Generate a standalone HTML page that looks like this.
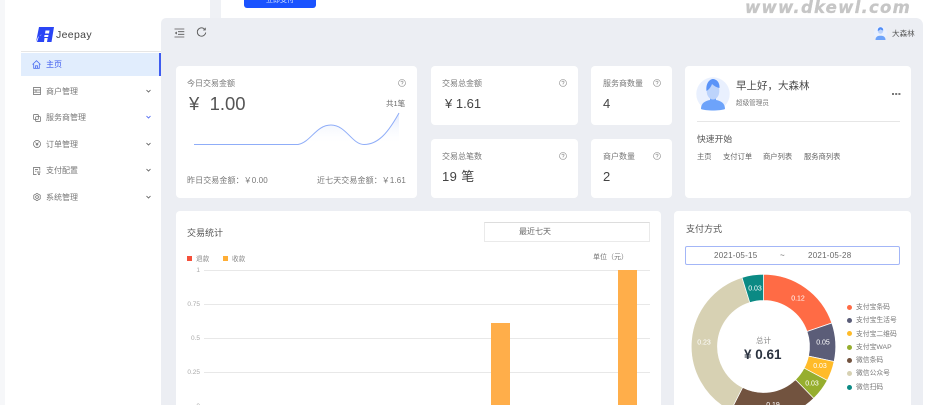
<!DOCTYPE html>
<html lang="zh">
<head>
<meta charset="utf-8">
<title>Jeepay</title>
<style>
html,body{margin:0;padding:0;background:#fff;width:929px;height:405px;overflow:hidden}
body{position:relative;font-family:"Liberation Sans","Noto Sans CJK SC",sans-serif;color:#666}
#w{position:absolute;left:0;top:0;width:929px;height:405px;overflow:hidden;filter:blur(.3px)}
.a,.t{position:absolute}
.t{line-height:12px;height:12px;white-space:nowrap;font-size:8px}
.card{position:absolute;background:#fff;border-radius:4px}
svg{position:absolute;overflow:visible}
.l{color:#777}
.chev{position:absolute;left:146px;width:5px;height:4px}
</style>
</head>
<body>
<div id="w">
<div class="a" style="left:0;top:0;width:5px;height:405px;background:#f6f7f9"></div>
<div class="a" style="left:210px;top:0;width:11px;height:18px;background:#eff1f5"></div>
<div class="a" style="left:244px;top:-10px;width:72px;height:18px;background:#1a53ff;border-radius:3px"></div>
<div class="t" style="left:266px;top:-5px;color:#cfe0ff;font-size:7px">立即支付</div>

<div class="t" style="left:745px;top:-1px;height:18px;line-height:18px;font-family:'DejaVu Sans',sans-serif;font-size:16.500px;font-weight:bold;font-style:italic;color:#c6c6c6;letter-spacing:1.250px;-webkit-text-stroke:.3px #c6c6c6">www.dkewl.com</div>

<!-- main bg -->
<div class="a" style="left:161px;top:18px;width:762px;height:387px;background:#eceef3;border-radius:5px 7px 0 0"></div>

<!-- logo -->
<svg style="left:36px;top:27px" width="18" height="15" viewBox="0 0 18 15">
<path d="M3 0H18L15.500 15H11L11.700 11H8.500L8 15H4L5.300 7.500L2 10L0 15Z" fill="#2a45f5"/>
<path d="M1 15L3 9L6 8L4.500 15Z" fill="#2a45f5"/>
<path d="M9.500 3.500H13.500L13 6.500H9Z M8.500 8H12.500L12.100 10H8.200Z" fill="#fff"/>
</svg>
<div class="t" style="left:56px;top:29px;font-size:10.500px;color:#444;letter-spacing:.35px">Jeepay</div>
<div class="a" style="left:21px;top:51px;width:140px;height:1px;background:#e6e6e6"></div>

<!-- nav -->
<div class="a" style="left:21px;top:53px;width:140px;height:23px;background:#e1edfd"></div>
<div class="a" style="left:159px;top:53px;width:2px;height:23px;background:#3f5cf0"></div>

<svg style="left:32px;top:60px" width="9" height="9" viewBox="0 0 9 9" fill="none" stroke="#4a6cf0" stroke-width=".8"><path d="M.5 4.500L4.500 .7L8.500 4.500M1.700 4V8.300H7.300V4M3.500 8.300V5.800H5.500V8.300"/></svg>
<div class="t" style="left:46px;top:59px;color:#3f5cf0">主页</div>

<svg style="left:33px;top:87px" width="8" height="8" viewBox="0 0 8 8" fill="none" stroke="#666" stroke-width=".7"><path d="M.5 .5H7.500V7.500H.5ZM.5 3H7.500M.5 5.200H7.500M3 3V5.200"/></svg>
<div class="t" style="left:46px;top:86px;color:#777">商户管理</div>
<svg class="chev" style="top:89px" viewBox="0 0 5 4" fill="none" stroke="#555" stroke-width=".8"><path d="M.5 1L2.500 3L4.500 1"/></svg>

<svg style="left:33px;top:114px" width="8" height="8" viewBox="0 0 8 8" fill="none" stroke="#666" stroke-width=".7"><rect x=".5" y=".5" width="4.800" height="4.800" rx=".6"/><rect x="2.700" y="2.700" width="4.800" height="4.800" rx=".6"/></svg>
<div class="t" style="left:46px;top:112px;color:#777">服务商管理</div>
<svg class="chev" style="top:115px" viewBox="0 0 5 4" fill="none" stroke="#3f5cf0" stroke-width=".8"><path d="M.5 1L2.500 3L4.500 1"/></svg>

<svg style="left:33px;top:140px" width="8" height="8" viewBox="0 0 8 8" fill="none" stroke="#666" stroke-width=".7"><circle cx="4" cy="4" r="3.500"/><path d="M2.500 2.500L4 4.200L5.500 2.500M4 4.200V6.300M2.700 4.700H5.300"/></svg>
<div class="t" style="left:46px;top:139px;color:#777">订单管理</div>
<svg class="chev" style="top:142px" viewBox="0 0 5 4" fill="none" stroke="#555" stroke-width=".8"><path d="M.5 1L2.500 3L4.500 1"/></svg>

<svg style="left:33px;top:167px" width="8" height="8" viewBox="0 0 8 8" fill="none" stroke="#666" stroke-width=".7"><path d="M6.800 3.500V.5H.5V7.500H3.500M2 2.500H5M2 4.200H3.500"/><path d="M4 5L7.500 5M5 7.500L7 7.500M4.500 6.200H7" /></svg>
<div class="t" style="left:46px;top:165px;color:#777">支付配置</div>
<svg class="chev" style="top:168px" viewBox="0 0 5 4" fill="none" stroke="#555" stroke-width=".8"><path d="M.5 1L2.500 3L4.500 1"/></svg>

<svg style="left:33px;top:193px" width="8" height="8" viewBox="0 0 8 8" fill="none" stroke="#666" stroke-width=".7"><path d="M4 .4L7.200 2.200V5.800L4 7.600L.8 5.800V2.200Z"/><circle cx="4" cy="4" r="1.400"/></svg>
<div class="t" style="left:46px;top:192px;color:#777">系统管理</div>
<svg class="chev" style="top:195px" viewBox="0 0 5 4" fill="none" stroke="#555" stroke-width=".8"><path d="M.5 1L2.500 3L4.500 1"/></svg>

<!-- toolbar -->
<svg style="left:174px;top:28px" width="11" height="10" viewBox="0 0 11 10" fill="none" stroke="#555" stroke-width=".8"><path d="M.5 1H10.300M4 3.700H10.300M4 6.300H10.300M.5 9H10.300"/><path d="M2.800 3.500L.8 5L2.800 6.500Z" fill="#555" stroke="none"/></svg>
<svg style="left:196px;top:27px" width="11" height="11" viewBox="0 0 11 11" fill="none" stroke="#555" stroke-width=".9"><path d="M8.900 2.500A4.200 4.200 0 1 0 9.700 5.500"/><path d="M9.300 .8V3H7.100" stroke-width=".8"/></svg>

<svg style="left:874px;top:26px" width="13" height="14" viewBox="0 0 13 14"><circle cx="6.500" cy="7" r="6.500" fill="#eaf1fe"/><path d="M1.500 14C1.500 10.500 4 9.800 6.500 9.800S11.500 10.500 11.500 14Z" fill="#6da3fa"/><circle cx="6.500" cy="5" r="2.700" fill="#bcd3fb"/><path d="M3.800 5C3.600 2.500 5 1.300 6.500 1.300S9.400 2.500 9.200 4.500C8 4.200 7 3.700 6.500 3.200C5.900 3.900 5 4.500 3.800 5Z" fill="#4f8cf7"/></svg>
<div class="t" style="left:892px;top:28px;font-size:7.600px;color:#555">大森林</div>

<!-- card 1 -->
<div class="card" style="left:176px;top:66px;width:241px;height:132px"></div>
<div class="t l" style="left:187px;top:78px">今日交易金额</div>
<svg style="left:398px;top:79px" width="8" height="8" viewBox="0 0 8 8" fill="none" stroke="#888" stroke-width=".6"><circle cx="4" cy="4" r="3.500"/><path d="M2.900 3.100C3 1.700 5.200 1.800 5.100 3.200C5 4 4 4 4 5M4 5.600V6.300"/></svg>
<div class="t" style="left:189px;top:92px;height:24px;line-height:24px;font-size:18.500px;color:#555;white-space:pre">¥  1.00</div>
<div class="t" style="left:386px;top:98px;color:#666;font-size:7.500px">共1笔</div>
<svg style="left:176px;top:66px" width="241" height="132" viewBox="0 0 241 132">
<defs><linearGradient id="g" x1="0" y1="0" x2="0" y2="1"><stop offset="0" stop-color="#c9d8fb" stop-opacity=".55"/><stop offset="1" stop-color="#fff" stop-opacity="0"/></linearGradient></defs>
<path d="M18 78.500H122C135 76 140 59 155 59C170 59 176 78.500 188 78.500C203 78.500 213 65 223 47V78.500Z" fill="url(#g)"/>
<path d="M18 78.500H122C135 76 140 59 155 59C170 59 176 78.500 188 78.500C203 78.500 213 65 223 47" fill="none" stroke="#8fadf8" stroke-width="1"/>
</svg>
<div class="t l" style="left:187px;top:175px;letter-spacing:.1px">昨日交易金额：￥0.00</div>
<div class="t l" style="left:317px;top:175px;letter-spacing:.1px">近七天交易金额：￥1.61</div>

<!-- small cards -->
<div class="card" style="left:431px;top:66px;width:147px;height:59px"></div>
<div class="t l" style="left:442px;top:78px">交易总金额</div>
<svg style="left:559px;top:79px" width="8" height="8" viewBox="0 0 8 8" fill="none" stroke="#888" stroke-width=".6"><circle cx="4" cy="4" r="3.500"/><path d="M2.900 3.100C3 1.700 5.200 1.800 5.100 3.200C5 4 4 4 4 5M4 5.600V6.300"/></svg>
<div class="t" style="left:445px;top:98px;font-size:13px;color:#444;white-space:pre">¥ 1.61</div>

<div class="card" style="left:431px;top:139px;width:147px;height:59px"></div>
<div class="t l" style="left:442px;top:151px">交易总笔数</div>
<svg style="left:559px;top:152px" width="8" height="8" viewBox="0 0 8 8" fill="none" stroke="#888" stroke-width=".6"><circle cx="4" cy="4" r="3.500"/><path d="M2.900 3.100C3 1.700 5.200 1.800 5.100 3.200C5 4 4 4 4 5M4 5.600V6.300"/></svg>
<div class="t" style="left:442px;top:171px;font-size:13px;color:#444;letter-spacing:.4px">19 笔</div>

<div class="card" style="left:591px;top:66px;width:81px;height:59px"></div>
<div class="t l" style="left:603px;top:78px">服务商数量</div>
<svg style="left:653px;top:79px" width="8" height="8" viewBox="0 0 8 8" fill="none" stroke="#888" stroke-width=".6"><circle cx="4" cy="4" r="3.500"/><path d="M2.900 3.100C3 1.700 5.200 1.800 5.100 3.200C5 4 4 4 4 5M4 5.600V6.300"/></svg>
<div class="t" style="left:603px;top:98px;font-size:13px;color:#444">4</div>

<div class="card" style="left:591px;top:139px;width:81px;height:59px"></div>
<div class="t l" style="left:603px;top:151px">商户数量</div>
<svg style="left:653px;top:152px" width="8" height="8" viewBox="0 0 8 8" fill="none" stroke="#888" stroke-width=".6"><circle cx="4" cy="4" r="3.500"/><path d="M2.900 3.100C3 1.700 5.200 1.800 5.100 3.200C5 4 4 4 4 5M4 5.600V6.300"/></svg>
<div class="t" style="left:603px;top:171px;font-size:13px;color:#444">2</div>

<!-- welcome -->
<div class="card" style="left:685px;top:66px;width:226px;height:132px"></div>
<svg style="left:696px;top:77px" width="34" height="34" viewBox="0 0 34 34"><circle cx="17" cy="17" r="16.700" fill="#e9f0fe"/><path d="M5 32C5 26 9 24 14 23V20H20V23C25 24 29 26 29 32C25 34 9 34 5 32Z" fill="#6da3fa"/><ellipse cx="17" cy="14" rx="6.300" ry="8.500" fill="#bcd3fb"/><path d="M10.500 14C9.500 6 14 2 17 2S24 5 23.500 11C21 10.500 18 9 16 7C15 10 13 12.500 10.500 14Z" fill="#5a93f8"/></svg>
<div class="t" style="left:736px;top:80px;font-size:10.500px;color:#4a4a4a">早上好，大森林</div>
<div class="t" style="left:736px;top:98px;font-size:6.600px;color:#777">超级管理员</div>
<div class="a" style="left:892px;top:93px;width:1.500px;height:1.500px;background:#777;box-shadow:3.200px 0 #777,6.400px 0 #777"></div>
<div class="a" style="left:697px;top:121px;width:203px;height:1px;background:#e6e6e6"></div>
<div class="t" style="left:697px;top:133px;font-size:8.800px;color:#555">快速开始</div>
<div class="t" style="left:697px;top:151px;font-size:7.300px;color:#666">主页</div>
<div class="t" style="left:723px;top:151px;font-size:7.300px;color:#666">支付订单</div>
<div class="t" style="left:763px;top:151px;font-size:7.300px;color:#666">商户列表</div>
<div class="t" style="left:804px;top:151px;font-size:7.300px;color:#666">服务商列表</div>

<!-- stats card -->
<div class="card" style="left:176px;top:211px;width:485px;height:200px"></div>
<div class="t" style="left:187px;top:227px;font-size:9px;color:#555">交易统计</div>
<div class="a" style="left:484px;top:222px;width:164px;height:18px;border:1px solid #eaeaea;border-top-color:#ddd;background:#fff"></div>
<div class="t" style="left:519px;top:226px;color:#666">最近七天</div>
<div class="a" style="left:187px;top:256px;width:5px;height:5px;background:#f5503a"></div>
<div class="t" style="left:196px;top:254px;font-size:6.600px;color:#888">退款</div>
<div class="a" style="left:223px;top:256px;width:5px;height:5px;background:#ffae35"></div>
<div class="t" style="left:232px;top:254px;font-size:6.600px;color:#888">收款</div>
<div class="t" style="left:593px;top:252px;font-size:7px;color:#777">单位（元）</div>

<div class="a" style="left:204px;top:270px;width:446px;height:1px;background:#e8e8e8"></div>
<div class="a" style="left:204px;top:304px;width:446px;height:1px;background:#e8e8e8"></div>
<div class="a" style="left:204px;top:338px;width:446px;height:1px;background:#e8e8e8"></div>
<div class="a" style="left:204px;top:372px;width:446px;height:1px;background:#e8e8e8"></div>
<div class="t" style="left:170px;width:30px;text-align:right;top:265px;font-size:6.500px;color:#aaa">1</div>
<div class="t" style="left:170px;width:30px;text-align:right;top:299px;font-size:6.500px;color:#aaa">0.75</div>
<div class="t" style="left:170px;width:30px;text-align:right;top:333px;font-size:6.500px;color:#aaa">0.5</div>
<div class="t" style="left:170px;width:30px;text-align:right;top:367px;font-size:6.500px;color:#aaa">0.25</div>
<div class="t" style="left:170px;width:30px;text-align:right;top:401px;font-size:6.500px;color:#aaa">0</div>
<div class="a" style="left:491px;top:323px;width:19px;height:82px;background:#ffae4a"></div>
<div class="a" style="left:618px;top:270px;width:19px;height:135px;background:#ffae4a"></div>

<!-- pay card -->
<div class="card" style="left:674px;top:211px;width:237px;height:200px"></div>
<div class="t" style="left:686px;top:223px;font-size:9px;color:#555">支付方式</div>
<div class="a" style="left:685px;top:246px;width:213px;height:17px;border:1px solid #a3b6f7;border-radius:2px;background:#fff"></div>
<div class="t" style="left:714px;top:250px;color:#666;letter-spacing:.25px">2021-05-15</div>
<div class="t" style="left:780px;top:250px;color:#666">~</div>
<div class="t" style="left:808px;top:250px;color:#666;letter-spacing:.25px">2021-05-28</div>

<svg style="left:674px;top:264px" width="180" height="141" viewBox="674 264 180 141">
<g stroke="#fff" stroke-width=".7">
<path fill="#ff6b45" d="M763.500 274.300A72.200 72.200 0 0 1 831.800 323.000L807.000 331.500A46 46 0 0 0 763.500 300.500Z"/>
<path fill="#5b5d78" d="M831.800 323.000A72.200 72.200 0 0 1 834.100 361.500L808.500 356.100A46 46 0 0 0 807.000 331.500Z"/>
<path fill="#ffbb29" d="M834.100 361.500A72.200 72.200 0 0 1 827.300 380.400L804.100 368.100A46 46 0 0 0 808.500 356.100Z"/>
<path fill="#96ae2e" d="M827.300 380.400A72.200 72.200 0 0 1 813.700 398.400L795.500 379.600A46 46 0 0 0 804.100 368.100Z"/>
<path fill="#72533f" d="M813.700 398.400A72.200 72.200 0 0 1 730.700 410.800L742.600 387.500A46 46 0 0 0 795.500 379.600Z"/>
<path fill="#d7d1b3" d="M730.700 410.800A72.200 72.200 0 0 1 742.000 277.500L749.800 302.600A46 46 0 0 0 742.600 387.500Z"/>
<path fill="#0b8a84" d="M742.000 277.500A72.200 72.200 0 0 1 763.500 274.300V300.500A46 46 0 0 0 749.800 302.600Z"/>
</g>
<g font-size="7" fill="#fff" text-anchor="middle" font-family="Liberation Sans, sans-serif">
<text x="798" y="300.500">0.12</text>
<text x="823" y="344.500">0.05</text>
<text x="820" y="368">0.03</text>
<text x="812" y="385.500">0.03</text>
<text x="773" y="407">0.19</text>
<text x="704" y="344.500">0.23</text>
<text x="755" y="290.500">0.03</text>
</g>
</svg>
<div class="t" style="left:756px;top:335px;font-size:7.500px;color:#888">总计</div>
<div class="t" style="left:744px;top:349px;font-size:13.500px;font-weight:bold;color:#2b3340;white-space:pre">¥ 0.61</div>

<div class="a" style="left:847px;top:304.500px;width:5px;height:5px;border-radius:50%;background:#ff6b45"></div>
<div class="a" style="left:847px;top:318px;width:5px;height:5px;border-radius:50%;background:#5b5d78"></div>
<div class="a" style="left:847px;top:331px;width:5px;height:5px;border-radius:50%;background:#ffbb29"></div>
<div class="a" style="left:847px;top:344.500px;width:5px;height:5px;border-radius:50%;background:#96ae2e"></div>
<div class="a" style="left:847px;top:358px;width:5px;height:5px;border-radius:50%;background:#72533f"></div>
<div class="a" style="left:847px;top:371px;width:5px;height:5px;border-radius:50%;background:#d7d1b3"></div>
<div class="a" style="left:847px;top:384.500px;width:5px;height:5px;border-radius:50%;background:#0b8a84"></div>
<div class="t" style="left:856px;top:302px;font-size:6.800px;color:#777">支付宝条码</div>
<div class="t" style="left:856px;top:315px;font-size:6.800px;color:#777">支付宝生活号</div>
<div class="t" style="left:856px;top:329px;font-size:6.800px;color:#777">支付宝二维码</div>
<div class="t" style="left:856px;top:342px;font-size:6.800px;color:#777">支付宝WAP</div>
<div class="t" style="left:856px;top:355px;font-size:6.800px;color:#777">微信条码</div>
<div class="t" style="left:856px;top:368px;font-size:6.800px;color:#777">微信公众号</div>
<div class="t" style="left:856px;top:382px;font-size:6.800px;color:#777">微信扫码</div>
</div>
</body>
</html>
